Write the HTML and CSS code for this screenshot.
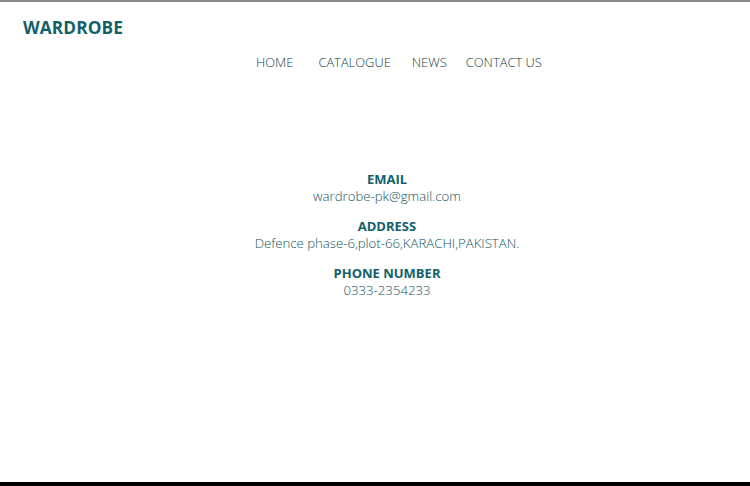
FILE: index.html
```html
<!DOCTYPE html>
<html>
<head>
<meta charset="utf-8">
<link rel="stylesheet" href="styles.css">
</head>
<body>
<div class="page">
  <header class="header">
    <div class="logo">WARDROBE</div>
    <nav class="nav">
      <a class="nav-item">HOME</a>
      <a class="nav-item">CATALOGUE</a>
      <a class="nav-item">NEWS</a>
      <a class="nav-item">CONTACT US</a>
    </nav>
  </header>
  <main class="contact">
    <div class="group">
      <div class="label">EMAIL</div>
      <div class="value">wardrobe-pk@gmail.com</div>
    </div>
    <div class="group">
      <div class="label">ADDRESS</div>
      <div class="value">Defence phase-6,plot-66,KARACHI,PAKISTAN.</div>
    </div>
    <div class="group">
      <div class="label">PHONE NUMBER</div>
      <div class="value">0333-2354233</div>
    </div>
  </main>
</div>
<div class="bottom-bar"></div>
</body>
</html>
```

FILE: styles.css
```css
html, body {
  margin: 0;
  padding: 0;
  background: #ffffff;
}
body {
  font-family: "Open Sans", "Noto Sans", sans-serif;
  height: 486px;
  display: flex;
  flex-direction: column;
  border-top: 2px solid #8a8a8a;
  box-sizing: border-box;
  overflow: hidden;
}
.page {
  flex: 1;
}
.header {
  padding: 15px 0 0 23px;
}
.logo {
  font-size: 17.3px;
  font-weight: 700;
  color: #13606a;
  line-height: 22px;
  letter-spacing: 0.1px;
}
.nav {
  display: flex;
  margin-top: 14px;
  padding-left: 233px;
}
.nav-item {
  font-size: 12.9px;
  font-weight: 300;
  color: #123f47;
  line-height: 18px;
  margin-right: 21px;
}
.nav-item:first-child {
  margin-right: 25px;
}
.nav-item:nth-child(3) {
  margin-right: 19px;
}
.contact {
  display: flex;
  flex-direction: column;
  align-items: center;
  padding-left: 24px;
  margin-top: 100px;
  gap: 13px;
}
.group {
  text-align: center;
}
.label {
  font-size: 13px;
  font-weight: 700;
  color: #13606a;
  line-height: 17px;
}
.value {
  font-size: 13.2px;
  font-weight: 300;
  color: #0f5560;
  line-height: 17px;
}
.bottom-bar {
  height: 4px;
  background: #000;
}
```
